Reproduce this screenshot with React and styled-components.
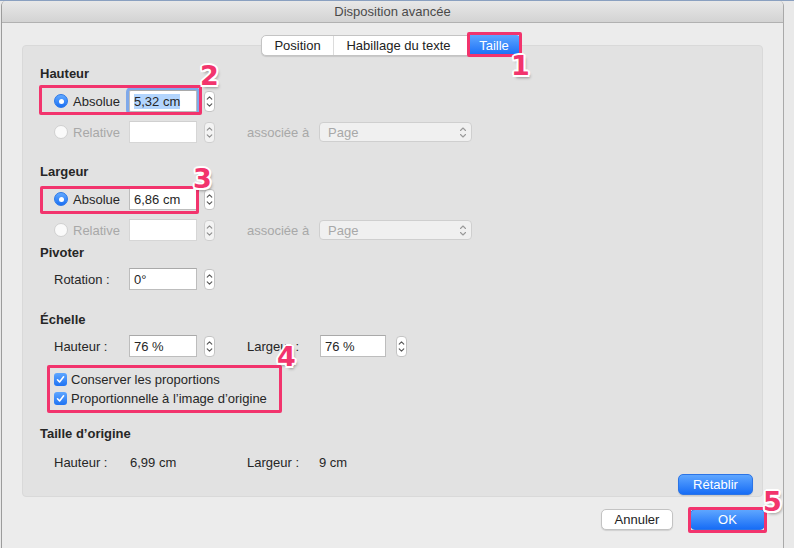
import styled, { createGlobalStyle } from "styled-components";

const Global = createGlobalStyle`
    html, body { margin: 0; padding: 0; }
    body {
        background: #e4e4e4;
        font-family: "Liberation Sans", Arial, sans-serif;
        font-size: 13px;
        color: #262626;
        overflow: hidden;
    }
`;

const Screen = styled.div`
    width: 794px;
    height: 548px;
    display: flex;
    background: #e9e9e9;
    border-top: 1px solid #8aa0c0;
    box-sizing: border-box;
`;

const Window = styled.div`
    width: 783px;
    box-sizing: border-box;
    margin-left: 1px;
    border-right: 1px solid #a9a9a9;
    border-left: 1px solid #9c9c9c;
    border-radius: 5px 5px 0 0;
    background: #ececec;
    display: flex;
    flex-direction: column;
    overflow: hidden;
`;

const TitleBar = styled.div`
    height: 21px;
    flex: none;
    display: flex;
    align-items: center;
    justify-content: center;
    background: linear-gradient(#e8e8e8, #d3d3d3);
    border-bottom: 1px solid #b1b1b1;
    color: #4a4a4a;
    font-size: 13px;
`;

const Body = styled.div`
    padding: 12px 20px 0 20px;
    display: flex;
    flex-direction: column;
`;

const Tabs = styled.div`
    align-self: center;
    position: relative;
    z-index: 1;
    display: flex;
    height: 21px;
    margin: 0 0 -11px -4px;
    background: #fff;
    border: 1px solid #c4c4c4;
    border-radius: 5px;
    box-shadow: 0 1px 1px rgba(0, 0, 0, 0.12);
    box-sizing: border-box;
`;

const Tab = styled.div`
    position: relative;
    width: ${p => p.$w}px;
    display: flex;
    align-items: center;
    justify-content: center;
    border-left: ${p => (p.$first ? "none" : "1px solid #dcdcdc")};
    color: ${p => (p.$active ? "#fff" : "#222")};
    background: ${p => (p.$active ? "linear-gradient(#5ea6ff, #176df6)" : "transparent")};
    border-radius: ${p => (p.$active ? "0 4px 4px 0" : "0")};
    margin: ${p => (p.$active ? "-1px -1px -1px 4px" : "0")};
`;

const Panel = styled.div`
    height: 452px;
    box-sizing: border-box;
    background: #e2e2e2;
    border: 1px solid #d9d9d9;
    border-radius: 4px;
    padding: 20px 9px 0 17px;
    display: flex;
    flex-direction: column;
`;

const Heading = styled.div`
    font-weight: bold;
    height: 16px;
    line-height: 16px;
    margin-top: ${p => p.$mt || 0}px;
`;

const Row = styled.div`
    position: relative;
    display: flex;
    align-items: center;
    height: 22px;
    padding-left: 14px;
    margin-top: ${p => p.$mt || 0}px;
    color: ${p => (p.$disabled ? "#a8a8a8" : "#262626")};
`;

const Lead = styled.div`
    width: 75px;
    flex: none;
    display: flex;
    align-items: center;
    gap: 5px;
`;

const Radio = styled.span`
    width: 14px;
    height: 14px;
    box-sizing: border-box;
    border-radius: 50%;
    display: flex;
    align-items: center;
    justify-content: center;
    background: ${p => (p.$on ? "linear-gradient(#62a9ff, #1b70f4)" : "#fafafa")};
    border: 1px solid ${p => (p.$on ? "#2a77e8" : "#d0d0d0")};

    &::after {
        content: "";
        width: 5px;
        height: 5px;
        border-radius: 50%;
        background: #fff;
        display: ${p => (p.$on ? "block" : "none")};
    }
`;

const Field = styled.div`
    width: ${p => p.$w || 68}px;
    height: 22px;
    flex: none;
    box-sizing: border-box;
    margin-left: ${p => p.$ml || 0}px;
    background: #fff;
    border: 1px solid ${p => (p.$disabled ? "#d6d6d6" : "#bdbdbd")};
    border-top-color: ${p => (p.$disabled ? "#d0d0d0" : "#a9a9a9")};
    box-shadow: ${p => (p.$focus ? "0 0 0 3px #7fa9ea" : "none")};
    border-radius: ${p => (p.$focus ? "2px" : "0")};
    display: flex;
    align-items: center;
    padding-left: 4px;
    color: #262626;
`;

const Selected = styled.span`
    background: #b3d5fd;
`;

const StepBox = styled.div`
    width: 11px;
    height: 21px;
    flex: none;
    margin-left: ${p => p.$ml || 7}px;
    box-sizing: border-box;
    background: #fff;
    border: 1px solid #c4c4c4;
    border-radius: 4px;
    display: flex;
    align-items: center;
    justify-content: center;
    opacity: ${p => (p.$disabled ? 0.6 : 1)};
`;

const Stepper = ({ disabled, ml }) => (
    <StepBox $disabled={disabled} $ml={ml}>
        <svg width="7" height="13" viewBox="0 0 7 13" fill="none" stroke="#555" strokeWidth="1.1" strokeLinecap="round" strokeLinejoin="round">
            <path d="M1.2 4.2 3.5 1.8 5.8 4.2" />
            <path d="M1.2 8.8 3.5 11.2 5.8 8.8" />
        </svg>
    </StepBox>
);

const Side = styled.div`
    width: 72px;
    flex: none;
    margin-left: 32px;
`;

const SelectBox = styled.div`
    width: 153px;
    height: 20px;
    box-sizing: border-box;
    background: #f0f0f0;
    border: 1px solid #cfcfcf;
    border-radius: 4px;
    display: flex;
    align-items: center;
    justify-content: space-between;
    padding: 0 4px 0 8px;
    color: #a8a8a8;
`;

const CheckList = styled.div`
    position: relative;
    display: flex;
    flex-direction: column;
    gap: 1px;
    margin-top: 13px;
`;

const CheckRow = styled.div`
    display: flex;
    align-items: center;
    gap: 4px;
    height: 18px;
    padding-left: 14px;
`;

const Box = styled.span`
    width: 13px;
    height: 13px;
    border-radius: 3px;
    background: linear-gradient(#5ea6ff, #1f73f3);
    display: flex;
    align-items: center;
    justify-content: center;
`;

const Value = styled.div`
    width: ${p => p.$w}px;
    flex: none;
`;

const Foot = styled.div`
    display: flex;
    justify-content: flex-end;
    margin-top: 1px;
`;

const Button = styled.div`
    position: relative;
    width: ${p => p.$w}px;
    height: 21px;
    box-sizing: border-box;
    display: flex;
    align-items: center;
    justify-content: center;
    border-radius: 5px;
    color: ${p => (p.$primary ? "#fff" : "#222")};
    background: ${p => (p.$primary ? "linear-gradient(#5ea6ff, #176df6)" : "#fff")};
    border: 1px solid ${p => (p.$primary ? "#2b74e6" : "#c3c3c3")};
    box-shadow: 0 1px 1px rgba(0, 0, 0, 0.12);
`;

const Actions = styled.div`
    display: flex;
    justify-content: flex-end;
    gap: 17px;
    padding: 12px 0 0;
    margin-right: -2px;
`;

const Mark = styled.div`
    position: absolute;
    left: ${p => p.$l}px;
    top: ${p => p.$t}px;
    width: ${p => p.$w}px;
    height: ${p => p.$h}px;
    box-sizing: border-box;
    border: 3px solid #f2346d;
    border-radius: 2px;
    pointer-events: none;
`;

const Num = styled.div`
    position: absolute;
    left: ${p => p.$l}px;
    top: ${p => p.$t}px;
    font-family: "DejaVu Sans", sans-serif;
    font-weight: bold;
    font-size: 27px;
    line-height: 27px;
    color: #f2346d;
    text-shadow:
        -2px 0 #fff, 2px 0 #fff, 0 -2px #fff, 0 2px #fff,
        -1.5px -1.5px #fff, 1.5px -1.5px #fff, -1.5px 1.5px #fff, 1.5px 1.5px #fff,
        2px 3px 3px rgba(0, 0, 0, 0.35);
    z-index: 2;
`;

const Check = () => (
    <svg width="9" height="9" viewBox="0 0 9 9" fill="none" stroke="#fff" strokeWidth="1.6" strokeLinecap="round" strokeLinejoin="round">
        <path d="M1.5 4.8 3.6 7 7.6 1.8" />
    </svg>
);

const Chevrons = () => (
    <svg width="8" height="13" viewBox="0 0 8 13" fill="none" stroke="#9a9a9a" strokeWidth="1.1" strokeLinecap="round" strokeLinejoin="round">
        <path d="M1.5 4.5 4 2 6.5 4.5" />
        <path d="M1.5 8.5 4 11 6.5 8.5" />
    </svg>
);

export default function App() {
    return (
        <>
            <Global />
            <Screen>
                <Window>
                    <TitleBar>Disposition avancée</TitleBar>
                    <Body>
                        <Tabs>
                            <Tab $w={71} $first>Position</Tab>
                            <Tab $w={129}>Habillage du texte</Tab>
                            <Tab $w={52} $active>
                                Taille
                                <Mark $l={-1} $t={-3} $w={55} $h={25} />
                                <Num $l={43} $t={17}>1</Num>
                            </Tab>
                        </Tabs>

                        <Panel>
                            <Heading>Hauteur</Heading>
                            <Row $mt={8}>
                                <Lead><Radio $on />Absolue</Lead>
                                <Field $focus><Selected>5,32 cm</Selected></Field>
                                <Stepper />
                                <Mark $l={-1} $t={-5} $w={163} $h={30} />
                                <Num $l={160} $t={-28}>2</Num>
                            </Row>
                            <Row $mt={9} $disabled>
                                <Lead><Radio />Relative</Lead>
                                <Field $disabled />
                                <Stepper disabled />
                                <Side>associée à</Side>
                                <SelectBox>Page<Chevrons /></SelectBox>
                            </Row>

                            <Heading $mt={21}>Largeur</Heading>
                            <Row $mt={8}>
                                <Lead><Radio $on />Absolue</Lead>
                                <Field>6,86 cm</Field>
                                <Stepper />
                                <Mark $l={0} $t={-2} $w={159} $h={28} />
                                <Num $l={153} $t={-23}>3</Num>
                            </Row>
                            <Row $mt={9} $disabled>
                                <Lead><Radio />Relative</Lead>
                                <Field $disabled />
                                <Stepper disabled />
                                <Side>associée à</Side>
                                <SelectBox>Page<Chevrons /></SelectBox>
                            </Row>

                            <Heading $mt={4}>Pivoter</Heading>
                            <Row $mt={7}>
                                <Lead>Rotation :</Lead>
                                <Field>0°</Field>
                                <Stepper />
                            </Row>

                            <Heading $mt={22}>Échelle</Heading>
                            <Row $mt={7}>
                                <Lead>Hauteur :</Lead>
                                <Field>76 %</Field>
                                <Stepper />
                                <Side>Largeur :</Side>
                                <Field $w={66} $ml={1}>76 %</Field>
                                <Stepper ml={10} />
                            </Row>

                            <CheckList>
                                <CheckRow><Box><Check /></Box>Conserver les proportions</CheckRow>
                                <CheckRow><Box><Check /></Box>Proportionnelle à l’image d’origine</CheckRow>
                                <Mark $l={7} $t={-5} $w={235} $h={48} />
                                <Num $l={237} $t={-27}>4</Num>
                            </CheckList>

                            <Heading $mt={19}>Taille d’origine</Heading>
                            <Row $mt={9}>
                                <Value $w={76}>Hauteur :</Value>
                                <Value $w={117}>6,99 cm</Value>
                                <Value $w={72}>Largeur :</Value>
                                <Value $w={60}>9 cm</Value>
                            </Row>

                            <Foot>
                                <Button $w={75} $primary>Rétablir</Button>
                            </Foot>
                        </Panel>

                        <Actions>
                            <Button $w={72}>Annuler</Button>
                            <Button $w={75} $primary>
                                OK
                                <Mark $l={-3} $t={-3} $w={79} $h={26} />
                                <Num $l={72} $t={-22}>5</Num>
                            </Button>
                        </Actions>
                    </Body>
                </Window>
            </Screen>
        </>
    );
}
